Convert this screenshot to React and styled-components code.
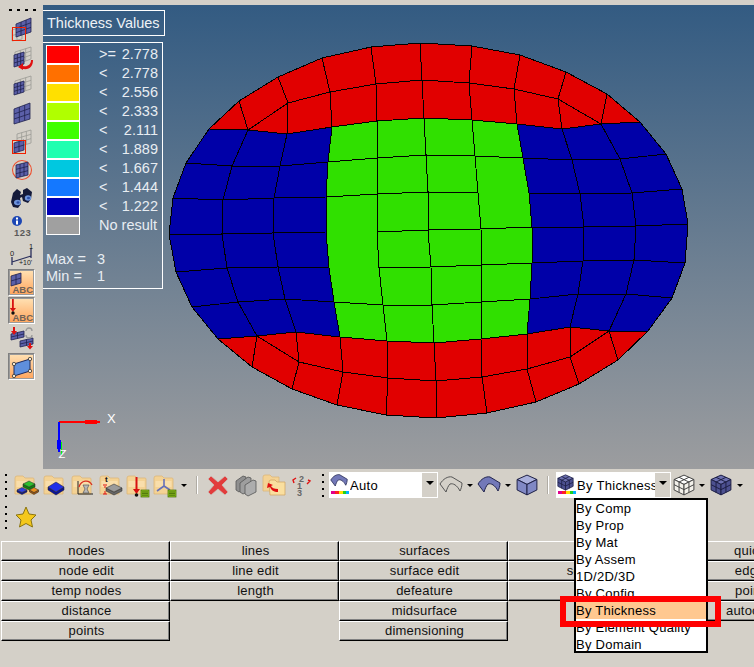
import React from "react";
import styled, { createGlobalStyle } from "styled-components";

const GlobalStyle = createGlobalStyle`
  html, body { margin: 0; padding: 0; background: #d4d0c8; }
  body { font-family: "Liberation Sans", Arial, sans-serif; }
`;

// mesh nodes, read off the screenshot (page coordinates)
const T = [[209,129],[239,101],[278,77],[322,58],[371,47],[420,43],[472,46],[520,55],[566,72],[607,94],[640,122]];
const R2 = [[248,130],[288,103],[330,92],[376,84],[422,80],[469,83],[514,89],[558,99],[601,124]];
const ROWS = [
  [[209,129],[248,130],[287,134],[332,127],[377,121],[424,118],[472,120],[517,124],[562,129],[601,124],[640,122]],
  [[186,163],[232,166],[280,166],[328,162],[377,158],[426,155],[475,156],[523,158],[572,160],[620,159],[666,154]],
  [[173,198],[223,200],[274,198],[326,197],[377,194],[428,192],[478,193],[529,193],[580,194],[632,193],[682,189]],
  [[169,234],[222,234],[273,233],[326,232],[377,232],[428,230],[481,229],[532,227],[584,227],[636,226],[688,224]],
  [[176,272],[227,268],[278,267],[329,268],[379,268],[431,267],[482,265],[532,263],[583,261],[634,260],[685,263]],
  [[192,307],[238,302],[285,299],[334,302],[383,305],[432,305],[481,302],[530,299],[578,294],[626,294],[672,298]],
  [[218,339],[257,336],[296,332],[340,337],[387,341],[434,343],[481,339],[527,334],[570,327],[609,331],[648,331]],
];
const R10 = [[257,336],[299,362],[343,372],[388,378],[436,381],[482,377],[527,369],[570,357],[609,331]];
const B = [[218,339],[252,367],[292,389],[337,405],[386,415],[436,418],[487,413],[536,402],[579,384],[618,360],[648,331]];

const pts = (list) => list.map((p) => p.join(",")).join(" ");
const col = (i) => ROWS.map((r) => r[i]);
const R3 = ROWS[0];
const R9 = ROWS[6];

const REGIONS = [
  { fill: "#e10000", points: [...T, ...[...R3].reverse()] },
  { fill: "#e10000", points: [...R9, ...[...B].reverse()] },
  { fill: "#0000a8", points: [...col(0), ...R9.slice(1, 4), ...col(3).reverse().slice(1), ...R3.slice(1, 3).reverse()] },
  { fill: "#0000a8", points: [...col(7), ...R9.slice(8), ...col(10).reverse().slice(1), ...R3.slice(8, 10).reverse()] },
  { fill: "#30e000", points: [...col(3), ...R9.slice(4, 8), ...col(7).reverse().slice(1), ...R3.slice(4, 7).reverse()] },
];

const TOP_LINES = [
  [T[1], R3[1]],
  [T[2], R2[1], R3[2]],
  [T[3], R2[2], R3[3]],
  [T[4], R2[3], R3[4]],
  [T[5], R2[4], R3[5]],
  [T[6], R2[5], R3[6]],
  [T[7], R2[6], R3[7]],
  [T[8], R2[7], R3[8]],
  [T[9], R3[9]],
];
const BOTTOM_LINES = [
  [R9[1], B[1]],
  [R9[2], R10[1], B[2]],
  [R9[3], R10[2], B[3]],
  [R9[4], R10[3], B[4]],
  [R9[5], R10[4], B[5]],
  [R9[6], R10[5], B[6]],
  [R9[7], R10[6], B[7]],
  [R9[8], R10[7], B[8]],
  [R9[9], B[9]],
];
const MESH_LINES = [
  T, R2, R10, B, ...ROWS,
  ...[0, 1, 2, 3, 4, 5, 6, 7, 8, 9, 10].map(col),
  ...TOP_LINES, ...BOTTOM_LINES,
];

const LEGEND = [
  { color: "#ff0000", sign: ">=", value: "2.778" },
  { color: "#ff7000", sign: "<", value: "2.778" },
  { color: "#ffe000", sign: "<", value: "2.556" },
  { color: "#b0ff00", sign: "<", value: "2.333" },
  { color: "#40ff00", sign: "<", value: "2.111" },
  { color: "#20ffb0", sign: "<", value: "1.889" },
  { color: "#00c8e0", sign: "<", value: "1.667" },
  { color: "#1478ff", sign: "<", value: "1.444" },
  { color: "#0000b8", sign: "<", value: "1.222" },
  { color: "#a0a0a0", none: true },
];

const PANEL = [
  ["nodes", "node edit", "temp nodes", "distance", "points"],
  ["lines", "line edit", "length"],
  ["surfaces", "surface edit", "defeature", "midsurface", "dimensioning"],
  ["solids", "solid edit", "ribs"],
  ["quick edit", "edge edit", "point edit", "autocleanup"],
];

const MENU = ["By Comp", "By Prop", "By Mat", "By Assem", "1D/2D/3D", "By Config", "By Thickness", "By Element Quality", "By Domain"];

// small drawing helpers
const gridPath = (a, b, c, d, n = 3) => {
  const mix = (p, q, t) => [p[0] + (q[0] - p[0]) * t, p[1] + (q[1] - p[1]) * t];
  let out = "";
  for (let i = 0; i <= n; i++) {
    const t = i / n;
    const u = mix(a, b, t), v = mix(d, c, t), s = mix(a, d, t), e = mix(b, c, t);
    out += `M${u[0]} ${u[1]}L${v[0]} ${v[1]}M${s[0]} ${s[1]}L${e[0]} ${e[1]}`;
  }
  return out;
};

const Patch = ({ a, b, c, d, solid, n = 3 }) => (
  <g>
    {solid && <polygon points={pts([a, b, c, d])} fill="#5b5fa8" />}
    <path d={gridPath(a, b, c, d, n)} fill="none" stroke={solid ? "#20224e" : "#9a9a94"} strokeWidth=".8" />
  </g>
);

const Slab = ({ x, y, w, h, t, top, side }) => (
  <g>
    <polygon points={pts([[x - w, y], [x, y + h], [x + w, y], [x + w, y + t], [x, y + h + t], [x - w, y + t]])} fill={side} stroke="#222" strokeWidth=".5" />
    <polygon points={pts([[x - w, y], [x, y - h], [x + w, y], [x, y + h]])} fill={top} stroke="#222" strokeWidth=".5" />
  </g>
);

const Folder = () => (
  <g>
    <path d="M1 5q0-2 2-2h6l2 2h8q1 0 1 1v15H1z" fill="#f4d294" stroke="#dcb67a" strokeWidth=".8" />
    <path d="M2.500 8h16v6h-16z" fill="#fbe6bb" opacity=".6" />
  </g>
);

const ListBadge = () => (
  <g>
    <rect x="15" y="17" width="8" height="7" fill="#8fc31f" stroke="#3f6b00" strokeWidth=".7" />
    <path d="M16 19h6M16 20.600h6M16 22.200h6" stroke="#2e5200" strokeWidth=".7" />
  </g>
);

const IconSvg = styled.svg`
  display: block;
  overflow: visible;
`;

const Icon = ({ w = 24, h = 24, children }) => (
  <IconSvg width={w} height={h} viewBox={`0 0 ${w} ${h}`}>{children}</IconSvg>
);

const Rainbow = () => (
  <g>
    <rect x="1" y="17" width="4" height="3" fill="#e0008c" />
    <rect x="5" y="17" width="4" height="3" fill="#ff2020" />
    <rect x="9" y="17" width="4" height="3" fill="#ffe000" />
    <rect x="13" y="17" width="3" height="3" fill="#20d020" />
    <rect x="16" y="17" width="3" height="3" fill="#00b0ff" />
  </g>
);

const Shell = ({ fill, stroke = "#22254e" }) => (
  <path d="M1 8C4 3 9 0 13 1L23 7C23 10 22 13 21 15C18 9 14 7 11 8C9 10 8 13 7 16Z" fill={fill} stroke={stroke} strokeWidth="1" />
);

const Cube = ({ fill, side, line = "#1c1e44", split = true }) => (
  <g stroke={line} strokeWidth=".9">
    <polygon points="10,1 19,5 10,9.500 1,5" fill={fill} />
    <polygon points="1,5 10,9.500 10,19 1,14.500" fill={side} />
    <polygon points="19,5 10,9.500 10,19 19,14.500" fill={side} />
    {split && <path d="M5.500 3 14.500 7.300M14.500 3 5.500 7.300M5.500 7.300V16.800M14.500 7.300V16.800M1 9.700 10 14.200 19 9.700" fill="none" />}
  </g>
);

function SmallLabel({ x, y, size, weight = 400, fill, spacing = 0, children }) {
  return (
    <text x={x} y={y} fontSize={size} fontWeight={weight} fill={fill} letterSpacing={spacing} fontFamily="Liberation Sans, sans-serif">
      {children}
    </text>
  );
}

const SideIcons = [
  <Icon key="a">
    <Patch a={[2, 12]} b={[12, 9]} c={[12, 21]} d={[2, 23]} n={2} />
    <Patch a={[6, 6]} b={[21, 0]} c={[21, 14]} d={[6, 19]} solid />
    <rect x="2.500" y="9.500" width="13" height="13" fill="none" stroke="#f02000" strokeWidth="1" />
  </Icon>,
  <Icon key="b">
    <Patch a={[5, 6]} b={[21, 1]} c={[21, 13]} d={[5, 19]} />
    <Patch a={[4, 9]} b={[14, 6]} c={[14, 18]} d={[4, 21]} solid />
    <path d="M21 14c0 5-4 7-8 6v-3l-5 4 5 3v-1c7 1 10-3 10-9z" fill="#e01010" />
  </Icon>,
  <Icon key="c">
    <Patch a={[5, 7]} b={[21, 2]} c={[21, 15]} d={[5, 20]} />
    <Patch a={[4, 10]} b={[14, 7]} c={[14, 18]} d={[4, 21]} solid />
  </Icon>,
  <Icon key="d">
    <Patch a={[4, 7]} b={[20, 1]} c={[20, 17]} d={[4, 22]} solid />
  </Icon>,
  <Icon key="e">
    <Patch a={[7, 4]} b={[21, 0]} c={[21, 13]} d={[7, 17]} />
    <Patch a={[4, 13]} b={[14, 10]} c={[14, 20]} d={[4, 23]} solid n={2} />
    <rect x="2.500" y="10.500" width="13" height="13" fill="none" stroke="#f02000" strokeWidth="1" />
  </Icon>,
  <Icon key="f">
    <circle cx="12" cy="12" r="9.500" fill="none" stroke="#ee5030" strokeWidth="1.100" />
    <Patch a={[6, 7]} b={[18, 4]} c={[18, 17]} d={[6, 20]} solid />
  </Icon>,
  <Icon key="g">
    <path d="M3 7l4-4 4 3-1 3 3-1 0-4 4-2 5 4-1 7-3 4-5-2-1-4-2 1 1 6-3 4-5-1-2-5z" fill="#141a3a" />
    <ellipse cx="7.500" cy="16.500" rx="3.500" ry="2.800" fill="#6f95dc" />
    <ellipse cx="18" cy="12" rx="3.200" ry="2.800" fill="#6f95dc" />
    <ellipse cx="18.500" cy="12" rx="1.500" ry="1.200" fill="#2c4fa8" />
    <ellipse cx="8" cy="16.500" rx="1.500" ry="1.200" fill="#2c4fa8" />
  </Icon>,
  <Icon key="h">
    <circle cx="7" cy="7" r="5" fill="#1c46b4" />
    <path d="M6 3.500h2v2H6zM6 6.500h2v4H6z" fill="#fff" />
    <SmallLabel x="4" y="22" size="9.500" weight="700" fill="#5a5a5a" spacing=".5">123</SmallLabel>
  </Icon>,
  <Icon key="i">
    <path d="M2 15v8M2 20L21 14M21 6v10" stroke="#2a2f5c" strokeWidth="1.300" fill="none" />
    <SmallLabel x="0" y="14" size="7.500" fill="#222">0</SmallLabel>
    <SmallLabel x="19" y="7" size="7.500" fill="#222">1</SmallLabel>
    <SmallLabel x="9" y="23" size="7" fill="#222">+10'</SmallLabel>
  </Icon>,
];

const Transfer = () => (
  <Icon>
    <Patch a={[1, 8]} b={[14, 5]} c={[14, 11]} d={[1, 14]} solid n={2} />
    <Patch a={[10, 15]} b={[23, 12]} c={[23, 18]} d={[10, 21]} solid n={2} />
    <path d="M3 1h2v4h2L4 9 1 5h2zM19 17h2v3h2l-3 3.500-3-3.500h2z" fill="#e01010" />
    <path d="M16 5a3 3 0 0 1 6 0M22 9a3 3 0 0 1-6 0" fill="none" stroke="#999" strokeWidth="1.300" />
  </Icon>
);

const Viewport = styled.div`
  position: relative;
  flex: 1;
  margin-top: 5px;
  background: linear-gradient(#335b82, #9c9d9f);
  overflow: hidden;
`;

const MeshSvg = styled.svg`
  position: absolute;
  left: 0;
  top: 0;
`;

const TitleBox = styled.div`
  position: absolute;
  left: -1px;
  top: 5px;
  width: 123px;
  height: 26px;
  box-sizing: border-box;
  border: 1px solid #fff;
  padding-left: 4px;
  font-size: 14.5px;
  line-height: 24px;
  color: #eef2f6;
`;

const LegendBox = styled.div`
  position: absolute;
  left: -1px;
  top: 37px;
  width: 121px;
  height: 247px;
  box-sizing: border-box;
  border: 1px solid #fff;
  padding: 2px 3px 0 3px;
  color: #e8edf2;
  font-size: 14.5px;
`;

const LegendRow = styled.div`
  display: flex;
  align-items: center;
  height: 19px;
  line-height: 19px;
`;

const Swatch = styled.div`
  width: 34px;
  height: 19px;
  box-sizing: border-box;
  border: 1px solid #fff;
  background: ${(p) => p.$color};
`;

const Sign = styled.span`
  width: 18px;
  margin-left: 19px;
`;

const Value = styled.span`
  width: 41px;
  text-align: right;
`;

const NoResult = styled.span`
  margin-left: 19px;
`;

const Stats = styled.div`
  margin-top: 16px;
`;

const Stat = styled.div`
  display: flex;
  height: 17px;
  line-height: 17px;
`;

const StatLabel = styled.span`
  width: 51px;
`;

const Page = styled.div`
  position: relative;
  width: 754px;
  height: 667px;
  overflow: hidden;
  background: #d4d0c8;
  display: flex;
  flex-direction: column;
`;

const Workspace = styled.div`
  display: flex;
  height: 469px;
  flex: none;
`;

const SideBar = styled.div`
  width: 43px;
  flex: none;
  display: flex;
  flex-direction: column;
  align-items: center;
`;

const SideGrip = styled.div`
  height: 16px;
  flex: none;
  display: flex;
  gap: 5px;
  padding: 9px 0 0 2px;
  box-sizing: border-box;
`;

const Dot = styled.span`
  width: 3px;
  height: 2px;
  background: #000;
`;

const SideCell = styled.div`
  height: 28px;
  width: 43px;
  flex: none;
  display: flex;
  align-items: center;
  justify-content: center;
`;

const SideButton = styled.div`
  width: 27px;
  height: 27px;
  box-sizing: border-box;
  border: 1px solid;
  border-color: #808080 #fff #fff #808080;
  box-shadow: inset 0 0 0 1px #9a9a9a;
  background: linear-gradient(#ffe2b4, #ffa45c);
`;

const ButtonGlyph = styled.svg`
  display: block;
`;

const Tools = styled.div`
  display: flex;
  align-items: center;
  height: 32px;
  flex: none;
`;

const ToolSlot = styled.div`
  width: ${(p) => p.$w}px;
  height: 28px;
  flex: none;
  display: flex;
  align-items: center;
  justify-content: center;
`;

const Grip = styled.div`
  width: ${(p) => p.$w}px;
  flex: none;
  display: flex;
  flex-direction: column;
  gap: 5px;
  align-items: center;
`;

const GripDot = styled.span`
  width: 2px;
  height: 2px;
  background: #000;
`;

const Caret = styled.span`
  width: 0;
  height: 0;
  border-left: 3px solid transparent;
  border-right: 3px solid transparent;
  border-top: 3px solid #000;
`;

const Divider = styled.span`
  width: 1px;
  height: 18px;
  background: #fff;
  box-shadow: -1px 0 0 #b0aca4;
`;

const Combo = styled.div`
  width: ${(p) => p.$w}px;
  height: 26px;
  flex: none;
  display: flex;
  align-items: center;
  box-sizing: border-box;
  border: 1px solid #fff;
  background: #fff;
  font-size: 13px;
  letter-spacing: 0.3px;
  color: #000;
`;

const ComboIcon = styled.div`
  width: 20px;
  height: 22px;
  flex: none;
`;

const ComboText = styled.div`
  flex: 1;
  overflow: hidden;
  white-space: nowrap;
`;

const ComboButton = styled.div`
  width: 15px;
  height: 24px;
  flex: none;
  display: flex;
  justify-content: center;
  padding-top: 8px;
  box-sizing: border-box;
  background: #d4d0c8;
`;

const ComboCaret = styled(Caret)`
  border-left-width: 4px;
  border-right-width: 4px;
  border-top-width: 4px;
`;

const PanelGrid = styled.div`
  display: flex;
  margin: 8px 0 0 1px;
  flex: none;
`;

const PanelColumn = styled.div`
  width: 169px;
  flex: none;
  display: flex;
  flex-direction: column;
`;

const PanelButton = styled.div`
  height: 20px;
  box-sizing: border-box;
  border-top: 1px solid #fff;
  border-left: 1px solid #fff;
  border-right: 1px solid #000;
  border-bottom: 1px solid #000;
  box-shadow: inset -1px -1px 0 #808080;
  padding-left: 2px;
  text-align: center;
  font-size: 13px;
  letter-spacing: 0.2px;
  line-height: 17px;
  color: #111;
`;

const Menu = styled.div`
  position: absolute;
  left: 574px;
  top: 498px;
  width: 134px;
  height: 155px;
  box-sizing: border-box;
  border: 2px solid #000;
  background: #fff;
  overflow: hidden;
`;

const MenuItem = styled.div`
  height: 17px;
  line-height: 17px;
  font-size: 13px;
  letter-spacing: 0.25px;
  color: #000;
  white-space: nowrap;
  background: ${(p) => (p.$active ? "#ffc890" : "transparent")};
`;

const Callout = styled.div`
  position: absolute;
  left: 560px;
  top: 596px;
  width: 161px;
  height: 31px;
  box-sizing: border-box;
  border: 6px solid #f00;
`;

const CrossIcon = () => (
  <Icon>
    <path d="M5 3l7 6 7-6 3 3-6 6 6 7-3 3-7-6-7 6-3-3 6-7-6-6z" fill="#e23c3c" stroke="#c8c4bc" strokeWidth=".7" />
  </Icon>
);

const StackIcon = () => (
  <Icon>
    <path d="M2 8l7-5 3 1v11l-7 4-3-2z" fill="#8f8f8f" stroke="#555" strokeWidth=".8" />
    <path d="M6 10l8-6 3 1v12l-8 4-3-2z" fill="#9e9e9e" stroke="#555" strokeWidth=".8" />
    <path d="M11 12l8-5 3 1v11l-8 4-3-2z" fill="#adadad" stroke="#555" strokeWidth=".8" />
  </Icon>
);

const FoldersIcon = () => (
  <Icon>
    <path d="M1 4q0-2 2-2h5l2 2h7v14H1z" fill="#f4d294" stroke="#dcb67a" strokeWidth=".8" />
    <path d="M7 9q0-2 2-2h4l2 2h8v13H8z" fill="#fadf9f" stroke="#d2a767" strokeWidth=".8" />
    <path d="M16 19c-4 0-7-2-8-5l-3 1 1-5 5 2-2 1c1 2 3 3 7 3z" fill="#e01010" />
  </Icon>
);

const NumbersIcon = () => (
  <Icon>
    <SmallLabel x="9" y="9" size="9" weight="700" fill="#666">2</SmallLabel>
    <SmallLabel x="7" y="16" size="9" weight="700" fill="#666">1</SmallLabel>
    <SmallLabel x="7" y="23" size="9" weight="700" fill="#666">3</SmallLabel>
    <path d="M6 5l-3 2 1 3 M17 11l3-3-2-1" fill="none" stroke="#e01010" strokeWidth="1.400" />
  </Icon>
);

const StarIcon = () => (
  <Icon>
    <polygon points="12,2 15,9 22,10 17,15 18.500,22 12,18.500 5.500,22 7,15 2,10 9,9" fill="#f4c81c" stroke="#8a7410" strokeWidth="1" />
  </Icon>
);

export default function App() {
  return (
    <Page>
      <GlobalStyle />
      <Workspace>
        <SideBar>
          <SideGrip>
            <Dot /><Dot /><Dot /><Dot />
          </SideGrip>
          {SideIcons.map((icon, i) => (
            <SideCell key={i}>{icon}</SideCell>
          ))}
          <SideCell>
            <SideButton>
              <ButtonGlyph width="25" height="25" viewBox="0 0 25 25">
                <Patch a={[2, 6]} b={[12, 3]} c={[12, 13]} d={[2, 16]} solid n={2} />
                <SmallLabel x="3.500" y="23" size="9.500" weight="700" fill="#6f6258">ABC</SmallLabel>
              </ButtonGlyph>
            </SideButton>
          </SideCell>
          <SideCell>
            <SideButton>
              <ButtonGlyph width="25" height="25" viewBox="0 0 25 25">
                <path d="M3 1h1.800v9H7l-3.100 4-3.100-4H3z" fill="#d81010" />
                <circle cx="4" cy="15" r="1.700" fill="#111" />
                <SmallLabel x="3.500" y="23" size="9.500" weight="700" fill="#6f6258">ABC</SmallLabel>
              </ButtonGlyph>
            </SideButton>
          </SideCell>
          <SideCell><Transfer /></SideCell>
          <SideCell>
            <SideButton>
              <ButtonGlyph width="25" height="25" viewBox="0 0 25 25">
                <polygon points="5,10 21,5 21,17 5,22" fill="#5f8fdc" stroke="#1c2a60" strokeWidth="1" />
                <g fill="#f4e6d0" stroke="#333" strokeWidth=".8">
                  <circle cx="5" cy="10" r="1.700" />
                  <circle cx="21" cy="5" r="1.700" />
                  <circle cx="21" cy="17" r="1.700" />
                  <circle cx="5" cy="22" r="1.700" />
                </g>
              </ButtonGlyph>
            </SideButton>
          </SideCell>
        </SideBar>
        <Viewport>
          <MeshSvg width="711" height="464" viewBox="43 5 711 464" shapeRendering="crispEdges">
            {REGIONS.map((r, i) => (
              <polygon key={i} points={pts(r.points)} fill={r.fill} />
            ))}
            {MESH_LINES.map((line, i) => (
              <polyline key={i} points={pts(line)} fill="none" stroke="#000" strokeWidth="1" />
            ))}
            <path d="M59 422H100" stroke="#f00" strokeWidth="1.500" />
            <rect x="85.500" y="420.500" width="11" height="3" fill="none" stroke="#f00" />
            <path d="M59 422V452" stroke="#00f" strokeWidth="1.500" />
            <path d="M61 442V455" stroke="#0f0" strokeWidth="1" />
            <rect x="57" y="440" width="4" height="9" fill="#00f" />
            <text x="107" y="423" fontSize="13" fill="#fff" fontFamily="Liberation Sans, sans-serif">X</text>
            <text x="59" y="458" fontSize="11" fontStyle="italic" fill="#fff" fontFamily="Liberation Sans, sans-serif">Z</text>
          </MeshSvg>
          <TitleBox>Thickness Values</TitleBox>
          <LegendBox>
            {LEGEND.map((row, i) => (
              <LegendRow key={i}>
                <Swatch $color={row.color} />
                {row.none ? (
                  <NoResult>No result</NoResult>
                ) : (
                  <>
                    <Sign>{row.sign}</Sign>
                    <Value>{row.value}</Value>
                  </>
                )}
              </LegendRow>
            ))}
            <Stats>
              <Stat><StatLabel>Max =</StatLabel><span>3</span></Stat>
              <Stat><StatLabel>Min =</StatLabel><span>1</span></Stat>
            </Stats>
          </LegendBox>
        </Viewport>
      </Workspace>

      <Tools>
        <Grip $w={12}><GripDot /><GripDot /><GripDot /><GripDot /></Grip>
        <ToolSlot $w={28}>
          <Icon>
            <Folder />
            <Slab x={15} y={11} w={6} h={3} t={3} top="#30c030" side="#108010" />
            <Slab x={8} y={17} w={5} h={2.500} t={2} top="#3040e0" side="#101890" />
            <Slab x={20} y={17} w={4.500} h={2.500} t={2} top="#e89020" side="#a05810" />
          </Icon>
        </ToolSlot>
        <ToolSlot $w={29}>
          <Icon>
            <Folder />
            <Slab x={13} y={14} w={8} h={5} t={3} top="#2030e8" side="#0c1498" />
          </Icon>
        </ToolSlot>
        <ToolSlot $w={28}>
          <Icon>
            <Folder />
            <path d="M7 8V21H22" fill="none" stroke="#222" strokeWidth="1" />
            <path d="M8 14C10 7 18 6 21 12" fill="none" stroke="#d83020" strokeWidth="1.300" />
            <path d="M12 12h6l-2 4 2 4h-6l2-4z" fill="#b8b8b8" stroke="#555" strokeWidth=".7" />
          </Icon>
        </ToolSlot>
        <ToolSlot $w={27}>
          <Icon>
            <Folder />
            <SmallLabel x="6" y="9" size="8" weight="700" fill="#111">t</SmallLabel>
            <path d="M4 12h4M4 21h4M6 13v2M6 18v3" stroke="#e01010" strokeWidth="1" />
            <Slab x={15} y={15} w={8} h={4} t={3} top="#9a9a9a" side="#666" />
          </Icon>
        </ToolSlot>
        <ToolSlot $w={27}>
          <Icon>
            <Folder />
            <path d="M9.500 4h2v12h2.500l-3.500 5-3.500-5h2.500z" fill="#d81010" />
            <circle cx="10.500" cy="22" r="1.800" fill="#111" />
            <ListBadge />
          </Icon>
        </ToolSlot>
        <ToolSlot $w={27}>
          <Icon>
            <Folder />
            <path d="M11 6V13L4 18M11 13L17 17" fill="none" stroke="#6670b8" strokeWidth="1.600" />
            <ListBadge />
          </Icon>
        </ToolSlot>
        <ToolSlot $w={12}><Caret /></ToolSlot>
        <ToolSlot $w={14}><Divider /></ToolSlot>
        <ToolSlot $w={28}><CrossIcon /></ToolSlot>
        <ToolSlot $w={28}><StackIcon /></ToolSlot>
        <ToolSlot $w={28}><FoldersIcon /></ToolSlot>
        <ToolSlot $w={28}><NumbersIcon /></ToolSlot>
        <Grip $w={13}><GripDot /><GripDot /><GripDot /><GripDot /></Grip>
        <Combo $w={109}>
          <ComboIcon>
            <Icon w={20} h={22}><g transform="scale(.75)"><Shell fill="#7278b8" /></g><Rainbow /></Icon>
          </ComboIcon>
          <ComboText>Auto</ComboText>
          <ComboButton><ComboCaret /></ComboButton>
        </Combo>
        <ToolSlot $w={26}>
          <Icon w={24} h={18}><Shell fill="#d4d0c8" stroke="#555" /></Icon>
        </ToolSlot>
        <ToolSlot $w={12}><Caret /></ToolSlot>
        <ToolSlot $w={26}>
          <Icon w={24} h={18}><Shell fill="#7278b8" /></Icon>
        </ToolSlot>
        <ToolSlot $w={12}><Caret /></ToolSlot>
        <ToolSlot $w={26}>
          <Icon w={22} h={22}><g transform="scale(1.100)"><Cube fill="#aab0dc" side="#8088c4" split={false} /></g></Icon>
        </ToolSlot>
        <ToolSlot $w={16}><Divider /></ToolSlot>
        <Combo $w={115}>
          <ComboIcon>
            <Icon w={20} h={22}><g transform="scale(.85)"><Cube fill="#6c70b0" side="#4c5090" /></g><Rainbow /></Icon>
          </ComboIcon>
          <ComboText>By Thickness</ComboText>
          <ComboButton><ComboCaret /></ComboButton>
        </Combo>
        <ToolSlot $w={25}>
          <Icon w={22} h={22}><g transform="scale(1.100)"><Cube fill="#fff" side="#f2f0ea" line="#444" /></g></Icon>
        </ToolSlot>
        <ToolSlot $w={12}><Caret /></ToolSlot>
        <ToolSlot $w={26}>
          <Icon w={22} h={22}><g transform="scale(1.100)"><Cube fill="#6c70b0" side="#4c5090" /></g></Icon>
        </ToolSlot>
        <ToolSlot $w={12}><Caret /></ToolSlot>
      </Tools>

      <Tools>
        <Grip $w={12}><GripDot /><GripDot /><GripDot /><GripDot /></Grip>
        <ToolSlot $w={28}><StarIcon /></ToolSlot>
      </Tools>

      <PanelGrid>
        {PANEL.map((labels, i) => (
          <PanelColumn key={i}>
            {labels.map((label) => (
              <PanelButton key={label}>{label}</PanelButton>
            ))}
          </PanelColumn>
        ))}
      </PanelGrid>

      <Menu>
        {MENU.map((item) => (
          <MenuItem key={item} $active={item === "By Thickness"}>{item}</MenuItem>
        ))}
      </Menu>
      <Callout />
    </Page>
  );
}
